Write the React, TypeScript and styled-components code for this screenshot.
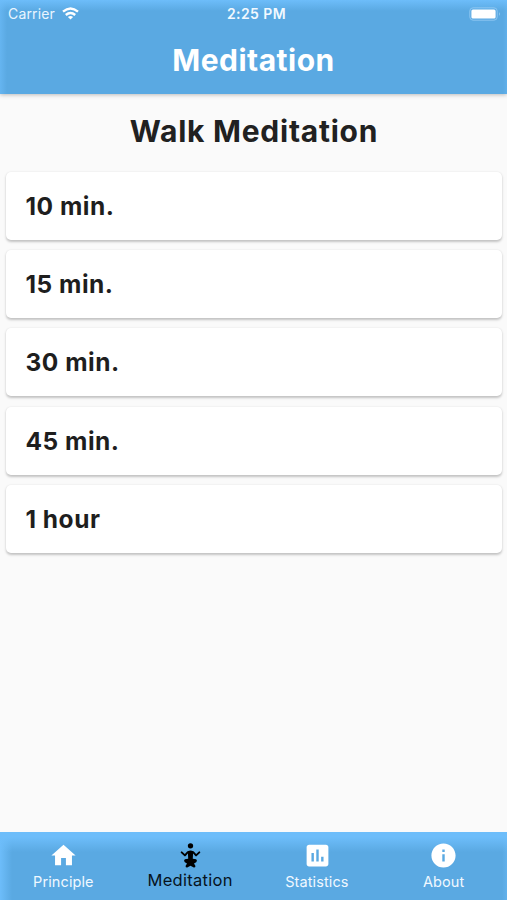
import React from "react";
import styled, { createGlobalStyle } from "styled-components";

const GlobalStyle = createGlobalStyle`
  * { box-sizing: border-box; }
  body { margin: 0; background: #fafafa; font-family: Inter, "Liberation Sans", sans-serif; }
`;

const Screen = styled.div`
  display: flex;
  flex-direction: column;
  height: 900px;
  width: 507px;
  overflow: hidden;
  background: #fafafa;
`;

const Header = styled.header`
  flex: none;
  height: 94px;
  color: #fff;
  background:
    linear-gradient(to bottom, #6dbdfa 0, #6dbdfa00 11px),
    linear-gradient(to right, #6dbdfa99 0, #6dbdfa00 7px),
    linear-gradient(to left, #6dbdfa55 0, #6dbdfa00 4px),
    #5aa9e2;
  box-shadow: 0 1px 4px rgba(0, 0, 0, 0.25);
`;

const StatusBar = styled.div`
  display: grid;
  grid-template-columns: 1fr auto 1fr;
  align-items: center;
  height: 27px;
  padding: 0 6px 0 8px;
`;

const Carrier = styled.div`
  display: flex;
  align-items: center;
  gap: 7px;
  font-size: 14px;
  letter-spacing: 0.15px;
  color: #e9f5ff;
`;

const Clock = styled.div`
  padding-left: 4px;
  font-size: 14px;
  font-weight: 600;
  letter-spacing: 0.4px;
  color: #f2f9ff;
`;

const Battery = styled.svg`
  justify-self: end;
  display: block;
`;

const AppTitle = styled.h1`
  margin: 0;
  height: 64px;
  line-height: 66px;
  text-align: center;
  font-size: 30px;
  font-weight: 700;
  letter-spacing: 0.5px;
`;

const Content = styled.main`
  flex: 1;
  padding: 0 5px;
`;

const SectionTitle = styled.h2`
  margin: 0;
  height: 78px;
  line-height: 74px;
  padding-left: 1px;
  text-align: center;
  font-size: 30px;
  font-weight: 650;
  letter-spacing: 0.75px;
  color: #212121;
`;

const CardList = styled.div`
  display: flex;
  flex-direction: column;
  gap: 10.2px;
`;

const Card = styled.div`
  display: flex;
  align-items: center;
  height: 68px;
  padding: 0 19.5px;
  margin: 0 0 0 1px;
  border-radius: 5px;
  background: #fff;
  color: #1e1e1e;
  font-size: 24.5px;
  font-weight: 650;
  letter-spacing: 0.5px;
  box-shadow: 0 1.5px 2.5px rgba(0, 0, 0, 0.22), 0 0 2px rgba(0, 0, 0, 0.03);
`;

const TabBar = styled.nav`
  flex: none;
  display: grid;
  grid-template-columns: repeat(4, 1fr);
  height: 68px;
  background:
    linear-gradient(to bottom, #6dbdfa 0, #6dbdfa 5px, #6dbdfa00 20px),
    linear-gradient(to right, #6dbdfa 0, #6dbdfa00 12px),
    linear-gradient(to left, #6dbdfa66 0, #6dbdfa00 5px),
    #5aa9e2;
`;

const Tab = styled.div<{ $active?: boolean }>`
  display: flex;
  flex-direction: column;
  align-items: center;
  padding-top: 9px;
  color: ${(p) => (p.$active ? "#000" : "#fff")};
`;

const TabIcon = styled.svg`
  display: block;
  width: 29px;
  height: 29px;
  margin-left: 0.7px;
  fill: currentColor;
`;

const TabLabel = styled.span<{ $active?: boolean }>`
  height: 20px;
  line-height: ${(p) => (p.$active ? 20 : 24)}px;
  font-size: ${(p) => (p.$active ? 16.5 : 14.5)}px;
  letter-spacing: ${(p) => (p.$active ? 0.3 : 0.1)}px;
  color: ${(p) => (p.$active ? "#06131d" : "#f0f8ff")};
`;

const durations = ["10 min.", "15 min.", "30 min.", "45 min.", "1 hour"];

const tabs = [
  { label: "Principle", icon: <path d="M10 20v-6h4v6h5v-8h3L12 3 2 12h3v8z" /> },
  {
    label: "Meditation",
    active: true,
    icon: (
      <>
        <circle cx="12" cy="4" r="2.2" />
        <path
          d="M4.7 9.4 7.4 11.9 9.8 9.2h4.4l2.4 2.7 2.7-2.5"
          fill="none"
          stroke="currentColor"
          strokeWidth="1.6"
          strokeLinecap="round"
          strokeLinejoin="round"
        />
        <path d="M9.8 8.4Q12 7.4 14.2 8.4L13.9 14.6 16.7 15Q18 16.2 16.7 17.6L14.9 18.6 16.1 20.6Q16.1 22 14.7 21.9L12 20.5 9.3 21.9Q7.9 22 7.9 20.6L9.1 18.6 7.3 17.6Q6 16.2 7.3 15L10.1 14.6Z" />
      </>
    ),
  },
  {
    label: "Statistics",
    icon: <path d="M19 3H5c-1.1 0-2 .9-2 2v14c0 1.1.9 2 2 2h14c1.1 0 2-.9 2-2V5c0-1.1-.9-2-2-2zM9 17H7v-7h2v7zm4 0h-2V7h2v10zm4 0h-2v-4h2v4z" />,
  },
  {
    label: "About",
    icon: <path d="M12 2C6.48 2 2 6.48 2 12s4.48 10 10 10 10-4.48 10-10S17.52 2 12 2zm1 15h-2v-6h2v6zm0-8h-2V7h2v2z" />,
  },
];

export default function App() {
  return (
    <Screen>
      <GlobalStyle />
      <Header>
        <StatusBar>
          <Carrier>
            Carrier
            <svg width="17" height="13" viewBox="0 0 17 13" fill="none" stroke="#fff" strokeWidth="2.4">
              <path d="M1 4.7Q8.5-1.7 16 4.7" />
              <path d="M3.8 8Q8.5 3.9 13.2 8" />
              <path d="M8.5 12.6 5.9 9.9Q8.5 7.9 11.1 9.9Z" fill="#fff" stroke="none" />
            </svg>
          </Carrier>
          <Clock>2:25 PM</Clock>
          <Battery width="32" height="14" viewBox="0 0 32 14">
            <rect x="0.8" y="0.8" width="27.4" height="12.4" rx="3.3" fill="none" stroke="#8cc6f1" />
            <rect x="2.4" y="2.4" width="24.2" height="9.2" rx="1.6" fill="#fff" />
            <path d="M30 5Q31.6 7 30 9Z" fill="#a5d3f5" />
          </Battery>
        </StatusBar>
        <AppTitle>Meditation</AppTitle>
      </Header>
      <Content>
        <SectionTitle>Walk Meditation</SectionTitle>
        <CardList>
          {durations.map((d) => (
            <Card key={d}>{d}</Card>
          ))}
        </CardList>
      </Content>
      <TabBar>
        {tabs.map((t) => (
          <Tab key={t.label} $active={t.active}>
            <TabIcon viewBox="0 0 24 24">{t.icon}</TabIcon>
            <TabLabel $active={t.active}>{t.label}</TabLabel>
          </Tab>
        ))}
      </TabBar>
    </Screen>
  );
}
